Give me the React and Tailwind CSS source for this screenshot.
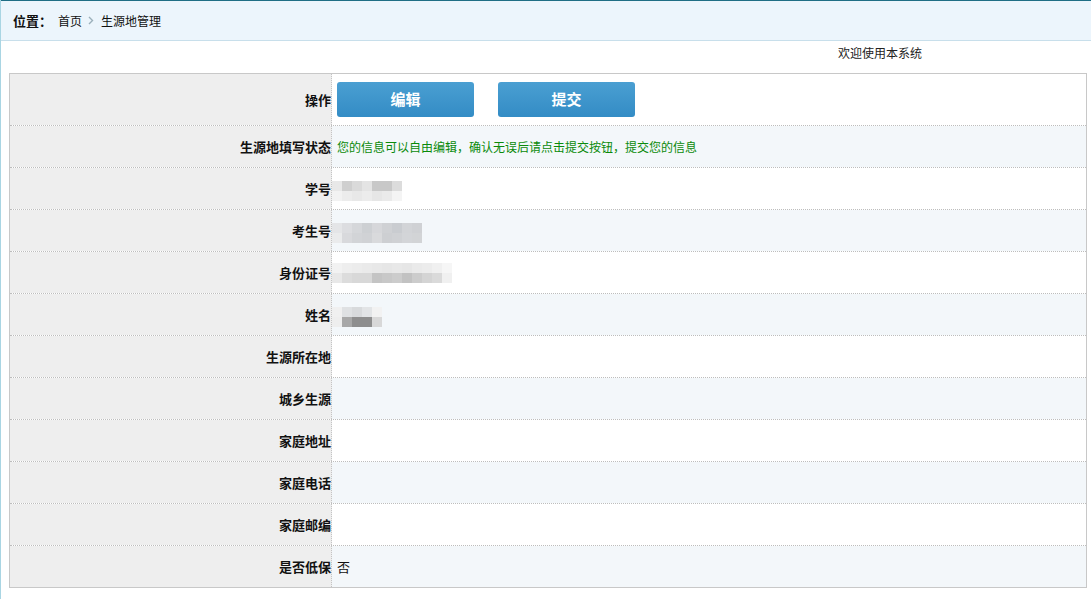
import React from 'react'

const font = { fontFamily: '"Noto Sans CJK SC", "Noto Sans", sans-serif' }

// pixelated blur placeholders for private values
const mosaics = {
  sno: [
    ['#e8e8e8', '#cfcfcf', '#dadada', '#e4e4e4', '#c8c8c8', '#c8c8c8', '#dcdcdc'],
    ['#f2f2f2', '#ececec', '#e8e8e8', '#ececec', '#e6e6e6', '#eaeaea', '#f4f4f4'],
  ],
  exam: [
    ['#e4e5e7', '#dcdde0', '#d5d7da', '#cdd0d3', '#d6d7da', '#cfd1d4', '#c9ccd0', '#d2d4d7', '#cfd1d4'],
    ['#eaebec', '#d8d9dc', '#d2d4d7', '#d0d2d5', '#d9dadc', '#cdcfd2', '#cfd1d4', '#d3d5d8', '#d2d4d6'],
  ],
  id: [
    ['#f2f2f2', '#eeeeee', '#ececec', '#eaeaea', '#e8e8e8', '#e6e6e6', '#e8e8e8', '#e6e6e6', '#eaeaea', '#ececec', '#f0f0f0', '#f6f6f6'],
    ['#e8e8e8', '#dcdcdc', '#d8d8d8', '#d8d8d8', '#c4c4c4', '#c8c8c8', '#cccccc', '#c2c2c2', '#cccccc', '#d4d4d4', '#dadada', '#f0f0f0'],
  ],
  name: [
    ['#f0f0f0', '#dfe1e3', '#d8dadc', '#e2e4e6', '#f2f2f2'],
    ['#eeeeee', '#a8a8a8', '#8e8e8e', '#8e8e8e', '#d8d8d8'],
  ],
}

function Mosaic({ rows }) {
  return (
    <div className="flex flex-col blur-[0.6px]">
      {rows.map((r, i) => (
        <div key={i} className="flex">
          {r.map((c, j) => (
            <div key={j} className="w-[10px] h-[10px]" style={{ background: c }} />
          ))}
        </div>
      ))}
    </div>
  )
}

const rows = [
  { label: '学号', value: <Mosaic rows={mosaics.sno} />, pad: 'pt-[4px]' },
  { label: '考生号', value: <Mosaic rows={mosaics.exam} />, pad: 'pt-[4px]' },
  { label: '身份证号', value: <Mosaic rows={mosaics.id} /> },
  { label: '姓名', value: <Mosaic rows={mosaics.name} />, pad: 'pt-[4px]' },
  { label: '生源所在地' },
  { label: '城乡生源' },
  { label: '家庭地址' },
  { label: '家庭电话' },
  { label: '家庭邮编' },
  { label: '是否低保', text: '否' },
]

function Row({ label, children, alt, last, first, flush }) {
  return (
    <div
      className={`grid grid-cols-[322px_1fr] ${first ? 'h-[52px]' : last ? 'h-[41px]' : 'h-[42px]'} ${
        last ? '' : 'border-b border-dotted border-[#bdbdbd]'
      }`}
    >
      <div className="bg-[#eeeeee] border-r border-dotted border-[#c4c4c4] flex items-center justify-end text-[13px] font-bold text-[#111] leading-none">
        {label}
      </div>
      <div className={`flex items-center ${alt ? 'bg-[#f3f7fa]' : 'bg-white'} ${flush ? '' : 'pl-[5px]'}`}>
        {children}
      </div>
    </div>
  )
}

export default function App() {
  return (
    <div className="min-h-[599px] bg-white border-l border-[#a9d5e3]" style={font}>
      <div className="h-[41px] bg-[#ecf5fc] border-t border-[#1f6e85] border-b border-b-[#c8dfeb] flex items-center pl-[12px] text-[12px] text-[#111]">
        <span className="text-[13px] font-bold mr-[6px]">位置：</span>
        <span>首页</span>
        <svg width="6" height="9" viewBox="0 0 6 9" className="ml-[6px] mr-[7px]">
          <path d="M1 1l3.5 3.5L1 8" fill="none" stroke="#9bb0bb" strokeWidth="1.4" />
        </svg>
        <span>生源地管理</span>
      </div>

      <div className="h-[24px] flex items-center justify-end pr-[169px] text-[12px] text-[#222]">
        欢迎使用本系统
      </div>

      <div className="ml-[8px] mr-[4px] mt-[8px] border border-[#c8c8c8]">
        <Row label="操作" first>
          <div className="flex gap-[24px]">
            <button className="w-[137px] h-[35px] rounded-[3px] bg-gradient-to-b from-[#4a9fd2] to-[#338cc5] text-white text-[15px] font-bold">
              编辑
            </button>
            <button className="w-[137px] h-[35px] rounded-[3px] bg-gradient-to-b from-[#4a9fd2] to-[#338cc5] text-white text-[15px] font-bold">
              提交
            </button>
          </div>
        </Row>
        <Row label="生源地填写状态" alt>
          <span className="text-[12px] text-[#0a8a0a]">
            您的信息可以自由编辑，确认无误后请点击提交按钮，提交您的信息
          </span>
        </Row>
        {rows.map((r, i) => (
          <Row key={r.label} label={r.label} alt={i % 2 === 1} last={i === rows.length - 1} flush={!!r.value}>
            {r.value && <div className={r.pad || ''}>{r.value}</div>}
            {r.text && <span className="text-[13px] leading-none text-[#111]">{r.text}</span>}
          </Row>
        ))}
      </div>
    </div>
  )
}
